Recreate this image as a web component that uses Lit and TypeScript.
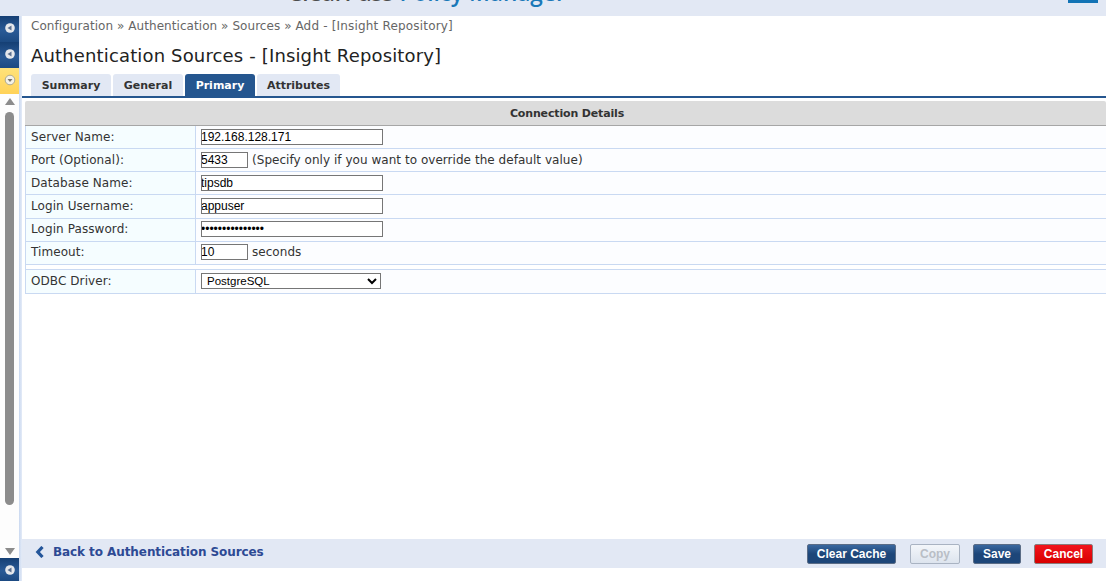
import { LitElement, html, css } from "lit";
import { customElement } from "lit/decorators.js";

const handle = html`<svg class="dot" width="12" height="12" viewBox="0 0 12 12"><circle cx="6" cy="6" r="4.8" fill="#e6e8ec"/><path d="M7.5 3.5v5L3.5 6z" fill="#5a6f8f"/></svg>`;
const handleOpen = html`<svg class="dot" width="12" height="12" viewBox="0 0 12 12"><circle cx="6" cy="6" r="4.8" fill="#f4f1e6" stroke="#9a9a8c" stroke-width=".8"/><path d="M3.5 5h5L6 8z" fill="#77736a"/></svg>`;

@customElement("app-root")
export class AppRoot extends LitElement {
  static styles = css`
    :host { display: flex; flex-direction: column; width: 1106px; height: 581px; overflow: hidden; background: #fff; font-family: "DejaVu Sans", Verdana, sans-serif; font-size: 12px; color: #333; }
    .top { height: 16px; flex: none; background: #e2e8f4; display: flex; align-items: flex-end; overflow: hidden; }
    .brand { margin-left: 288px; font-family: "Open Sans", "Liberation Sans", sans-serif; font-size: 22.6px; font-weight: 600; line-height: 24px; height: 12px; margin-bottom: 11px; display: flex; align-items: flex-end; white-space: nowrap; color: #4c4c4c; }
    .brand b { font-weight: 600; color: #1a78b8; margin-left: 6px; }
    .brand-mark { margin-left: auto; margin-right: 8px; margin-bottom: 13px; width: 30px; height: 3px; background: #1273b5; }
    .body { flex: 1; display: flex; min-height: 0; }
    .side { width: 19px; flex: none; display: flex; flex-direction: column; background: #fdfdfd; }
    .stripe { width: 3px; flex: none; background: linear-gradient(90deg, #c9d8f0, #e4ebf7); }
    .acc { height: 26px; flex: none; display: flex; align-items: center; justify-content: center; background: linear-gradient(#153f74, #2a5a96 55%, #1c4a82); box-sizing: border-box; padding-bottom: 2px; }
    .acc.on { background: linear-gradient(#ffe27a, #ffd257); }
    .acc.last { height: 23px; padding-bottom: 0; }
    .dot { display: block; }
    .track { flex: 1; display: flex; flex-direction: column; align-items: center; padding: 4px 0 0; box-sizing: border-box; min-height: 0; }
    .arrow-up { width: 0; height: 0; border: 5px solid transparent; border-top: 0; border-bottom: 7px solid #8c8c8c; flex: none; }
    .arrow-down { width: 0; height: 0; border: 5px solid transparent; border-bottom: 0; border-top: 7px solid #8c8c8c; flex: none; margin-bottom: 3px; }
    .thumb { width: 9px; height: 393px; margin: 7px 0 auto; background: #8c8c8c; border-radius: 5px; flex: none; }
    .main { flex: 1; min-width: 0; display: flex; flex-direction: column; }
    .crumb { box-sizing: border-box; padding: 3px 0 0 9px; line-height: 15px; height: 19px; color: #666; font-size: 12px; letter-spacing: 0.06px; }
    .tail { letter-spacing: 0.18px; }
    h1 { margin: 9px 0 0 9px; font-size: 18px; font-weight: 400; line-height: 24px; color: #222; height: 24px; letter-spacing: 0.15px; }
    .tabs { display: flex; gap: 2px; margin-top: 6px; padding-left: 9px; height: 22px; border-bottom: 2px solid #25568f; flex: none; }
    .tab { height: 22px; box-sizing: border-box; background: #e2e8f4; border-radius: 3px 3px 0 0; font-size: 11px; font-weight: 700; color: #333; display: flex; align-items: center; justify-content: center; }
    .tab.on { background: #25568f; color: #fff; }
    .panel { margin: 3px 0 0 3px; flex: 1; min-height: 0; }
    .head { height: 25px; box-sizing: border-box; background: #dcdcdc; border-bottom: 1px solid #a6a6a6; border-radius: 2px 2px 0 0; font-size: 11px; font-weight: 700; color: #333; display: flex; align-items: center; justify-content: center; letter-spacing: -0.15px; padding-left: 3px; }
    .grid { border-left: 1px solid #c9d9f2; }
    .row { display: grid; grid-template-columns: 170px 1fr; height: 23px; box-sizing: border-box; border-bottom: 1px solid #c9d9f2; }
    .label { background: #f5fdff; border-right: 1px solid #c9d9f2; padding-left: 5px; display: flex; align-items: center; color: #333; letter-spacing: 0.08px; }
    .val { background: #fcfdff; padding-left: 5px; display: flex; align-items: center; gap: 4px; color: #333; letter-spacing: 0.04px; }
    .row.tall { height: 24px; }
    .row.tall > div { padding-bottom: 1px; }
    .row.up > div { padding-bottom: 2px; }
    .row.sep { border-top: 1px solid #c9d9f2; height: 25px; margin-top: 4px; }
    .row.sep > div { padding-bottom: 2px; }
    input { box-sizing: border-box; height: 16px; padding: 0; margin: 0; border: 1px solid #767676; font-family: "Liberation Sans", Arial, sans-serif; font-size: 12px; color: #000; background: #fff; outline: none; border-radius: 0; text-indent: -1px; }
    .wide { width: 182px; }
    .short { width: 47px; }
    select { box-sizing: border-box; width: 180px; height: 16px; margin: 0; padding: 0 0 0 1px; border: 1px solid #767676; background: #fff; font-family: "Liberation Sans", Arial, sans-serif; font-size: 11.5px; color: #000; border-radius: 0; }
    .foot { height: 29px; flex: none; background: #e2e8f4; margin-bottom: 13px; display: flex; align-items: center; padding: 0 13px; gap: 13px; }
    .back { display: flex; align-items: center; gap: 8px; font-size: 12px; font-weight: 700; color: #2d4a94; margin-right: auto; margin-top: -3px; letter-spacing: -0.08px; }
    .btn { height: 20px; box-sizing: border-box; border-radius: 2px; border: 1px solid #5a6c86; background: linear-gradient(#3a689f, #1d4679 50%, #1d4679); color: #fff; font-family: "Liberation Sans", Arial, sans-serif; font-size: 12px; font-weight: 700; display: flex; align-items: center; justify-content: center; }
    .btn.off { background: linear-gradient(#f3f6fa, #dde4ee); border-color: #a9b3c2; color: #b9bec6; margin-left: 1px; }
    .btn.red { background: linear-gradient(#f2141c, #d80000); border-color: #8a7a7a; }
  `;

  private row(label: string, val: unknown, cls = "") {
    return html`<div class="row ${cls}"><div class="label">${label}</div><div class="val">${val}</div></div>`;
  }

  render() {
    return html`
      <div class="top"><div class="brand">ClearPass<b>Policy Manager</b></div><div class="brand-mark"></div></div>
      <div class="body">
        <div class="side">
          <div class="acc">${handle}</div>
          <div class="acc">${handle}</div>
          <div class="acc on">${handleOpen}</div>
          <div class="track"><div class="arrow-up"></div><div class="thumb"></div><div class="arrow-down"></div></div>
          <div class="acc last">${handle}</div>
        </div>
        <div class="stripe"></div>
        <div class="main">
          <div class="crumb">Configuration » Authentication » Sources » <span class="tail">Add - [Insight Repository]</span></div>
          <h1>Authentication Sources - [Insight Repository]</h1>
          <div class="tabs">
            <div class="tab" style="width:80px">Summary</div>
            <div class="tab" style="width:70px">General</div>
            <div class="tab on" style="width:70px">Primary</div>
            <div class="tab" style="width:83px">Attributes</div>
          </div>
          <div class="panel">
            <div class="head">Connection Details</div>
            <div class="grid">
              ${this.row("Server Name:", html`<input class="wide" .value=${"192.168.128.171"} />`)}
              ${this.row("Port (Optional):", html`<input class="short" .value=${"5433"} /><span>(Specify only if you want to override the default value)</span>`)}
              ${this.row("Database Name:", html`<input class="wide" .value=${"tipsdb"} />`)}
              ${this.row("Login Username:", html`<input class="wide" .value=${"appuser"} />`, "tall")}
              ${this.row("Login Password:", html`<input class="wide" type="password" .value=${"•••••••••••••••"} />`, "up")}
              ${this.row("Timeout:", html`<input class="short" .value=${"10"} /><span>seconds</span>`, "up")}
              ${this.row("ODBC Driver:", html`<select><option>PostgreSQL</option></select>`, "sep")}
            </div>
          </div>
          <div class="foot">
            <div class="back">
              <svg width="10" height="12" viewBox="0 0 10 12"><path d="M7.5 1 2.8 6l4.7 5" fill="none" stroke="#24569a" stroke-width="3.2"/></svg>
              Back to Authentication Sources
            </div>
            <div class="btn" style="width:89px">Clear Cache</div>
            <div class="btn off" style="width:50px">Copy</div>
            <div class="btn" style="width:48px">Save</div>
            <div class="btn red" style="width:59px">Cancel</div>
          </div>
        </div>
      </div>
    `;
  }
}
